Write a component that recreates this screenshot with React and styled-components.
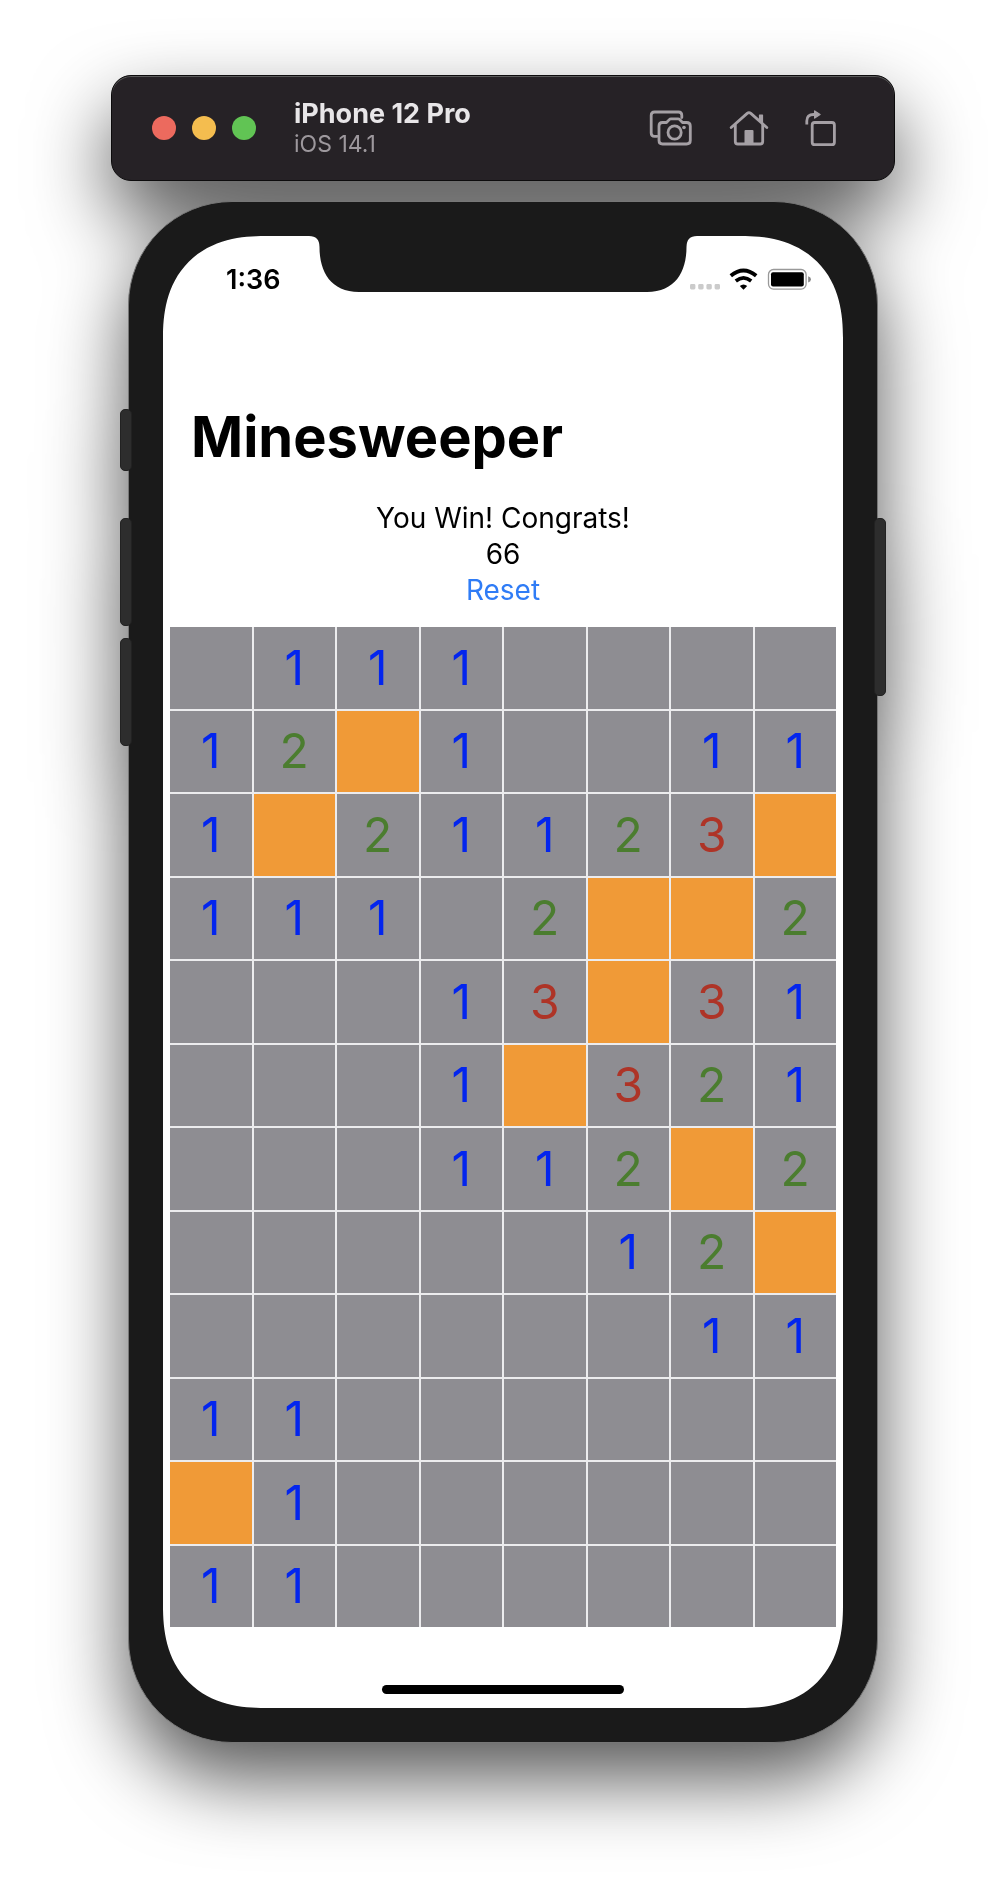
import React from "react";
import styled, { createGlobalStyle } from "styled-components";

const GlobalStyle = createGlobalStyle`
  *, *::before, *::after { box-sizing: border-box; }
  body {
    margin: 0;
    background: #fff;
    font-family: Inter, Roboto, "Liberation Sans", sans-serif;
    -webkit-font-smoothing: antialiased;
  }
  button { font: inherit; border: 0; padding: 0; background: none; cursor: pointer; }
  h1, p { margin: 0; }
`;

const Stage = styled.main`
  display: flex;
  flex-direction: column;
  align-items: center;
  gap: 20px;
  padding: 75px 20px 148px;
  filter: drop-shadow(0 36px 39px rgba(0, 0, 0, 0.66));
`;

const Toolbar = styled.header`
  display: flex;
  align-items: center;
  width: 100%;
  max-width: 784px;
  height: 106px;
  padding: 0 57px 0 40px;
  border: 1px solid #0c0b0c;
  border-radius: 20px;
  background: #262226;
  box-shadow: inset 0 1px 0 #5a5a5a;
`;

const Lights = styled.div`
  display: flex;
  gap: 16px;
  margin-right: 38px;
`;

const Light = styled.button`
  width: 24px;
  height: 24px;
  border-radius: 50%;
  background: ${(p) => p.$color};
`;

const Device = styled.div`
  flex: 1;
`;

const DeviceName = styled.p`
  font-size: 27px;
  line-height: 32px;
  font-weight: 700;
  color: #e8e6e8;
`;

const DeviceOs = styled.p`
  font-size: 23px;
  line-height: 28px;
  color: #9d989d;
`;

const Tools = styled.div`
  display: flex;
  align-items: center;
  gap: 36px;
`;

const Tool = styled.button`
  display: flex;
  color: #a5a0a5;
`;

const Phone = styled.section`
  position: relative;
  width: 100%;
  max-width: 750px;
  padding: 34px;
  border: 1px solid #777;
  border-radius: 104px;
  background: #1a1a1a;
`;

const SideButton = styled.span`
  position: absolute;
  top: ${(p) => p.$top}px;
  ${(p) => p.$side}: -9px;
  width: 12px;
  height: ${(p) => p.$length}px;
  border: 1px solid #222;
  border-radius: 5px;
  background: #2d2d2d;
`;

const Screen = styled.div`
  position: relative;
  display: flex;
  flex-direction: column;
  border-radius: 90px;
  background: #fff;
  color: #000;

  @supports (corner-shape: superellipse(1.25)) {
    border-radius: 102px;
    corner-shape: superellipse(1.25);
  }
`;

const Notch = styled.svg`
  position: absolute;
  top: -1px;
  left: 50%;
  transform: translateX(-50%);
`;

const StatusBar = styled.div`
  display: flex;
  align-items: center;
  justify-content: space-between;
  height: 88px;
  padding: 0 31px 0 63px;
`;

const Time = styled.span`
  font-size: 27px;
  line-height: 32px;
  font-weight: 600;
`;

const Title = styled.h1`
  padding: 78px 28px 0;
  font-size: 56px;
  line-height: 70px;
  font-weight: 700;
`;

const Summary = styled.div`
  display: flex;
  flex-direction: column;
  align-items: center;
  padding: 28px 0 19px;
  font-size: 28px;
  line-height: 36px;
`;

const Reset = styled.button`
  line-height: 36px;
  color: #2f7cf6;
`;

const Board = styled.div`
  display: grid;
  grid-template-columns: repeat(8, 1fr);
  gap: 2px;
  margin: 0 7px;
  background: #ececee;
`;

const digitColors = { 1: "#0325ee", 2: "#4b7d2f", 3: "#ae3427" };

const Cell = styled.button`
  display: flex;
  align-items: center;
  justify-content: center;
  min-width: 0;
  aspect-ratio: 1;
  background: ${(p) => (p.$mine ? "#f09a37" : "#8e8d92")};
  color: ${(p) => digitColors[p.$value] || "inherit"};
  font-size: 48px;
  line-height: 58px;
`;

const HomeArea = styled.div`
  display: flex;
  justify-content: center;
  padding: 58px 0 14px;
`;

const HomeIndicator = styled.div`
  width: 242px;
  height: 9px;
  border-radius: 5px;
  background: #000;
`;

const rows = [
  ".111....",
  "12*1..11",
  "1*21123*",
  "111.2**2",
  "...13*31",
  "...1*321",
  "...112*2",
  ".....12*",
  "......11",
  "11......",
  "*1......",
  "11......",
];

const ScreenshotIcon = () => (
  <svg width="44" height="36" viewBox="0 0 44 36" fill="none" stroke="currentColor" strokeWidth="2.800" strokeLinejoin="round" strokeLinecap="round">
    <path d="M8 26.300H5.500Q2.200 26.300 2.200 23V5.300Q2.200 2 5.500 2H29.500Q32.800 2 32.800 5.300V7.500" />
    <path d="M13.500 12.500H17.500L20.300 9.600Q21 8.900 22 8.900H29Q30 8.900 30.700 9.600L33.500 12.500H37.500Q41.300 12.500 41.300 16V30.500Q41.300 34 37.500 34H13.500Q10 34 10 30.500V16Q10 12.500 13.500 12.500Z" />
    <circle cx="25.600" cy="22.500" r="6.600" />
    <circle cx="35" cy="17.500" r="1.800" fill="currentColor" stroke="none" />
  </svg>
);

const HomeIcon = () => (
  <svg width="40" height="36" viewBox="0 0 40 36" fill="none" stroke="currentColor" strokeWidth="2.800" strokeLinejoin="round" strokeLinecap="round">
    <path d="M2.200 17.500L18.200 3.400Q20 1.800 21.800 3.400L37.800 17.500" />
    <path d="M6.300 15V31.500Q6.300 34 8.800 34H31.200Q33.700 34 33.700 31.500V15" />
    <path d="M15.500 21Q15.500 20 16.500 20H23.500Q24.500 20 24.500 21V34H15.500Z" fill="currentColor" stroke="none" />
    <path d="M30.500 5H33.500V13L30.500 10Z" fill="currentColor" strokeWidth="1.200" />
  </svg>
);

const RotateIcon = () => (
  <svg width="32" height="38" viewBox="0 0 32 38" fill="none" stroke="currentColor" strokeWidth="2.800" strokeLinejoin="round">
    <rect x="7.200" y="13.500" width="22.200" height="22.200" rx="2.500" />
    <path d="M1.800 15.500V12Q1.800 5.500 8.500 5.500H10" />
    <path d="M9.700 2L15 5.500L9.700 9Z" fill="currentColor" strokeWidth="1.400" />
  </svg>
);

const StatusIcons = () => (
  <svg width="122" height="24" viewBox="0 0 122 24" aria-hidden="true">
    {[0, 8.200, 16.400, 24.600].map((x) => (
      <rect key={x} x={x} y="16" width="5.400" height="5.400" rx="1.400" fill="#cbcbcb" />
    ))}
    <g fill="none" stroke="#000">
      <path d="M40.800 7.800Q53.500 -2.800 66.200 7.800" strokeWidth="3.800" />
      <path d="M45.800 13Q53.500 6.600 61.200 13" strokeWidth="3.600" />
    </g>
    <path d="M53.500 21.800L49.800 18Q53.500 14.800 57.200 18Z" />
    <rect x="78.500" y="1.500" width="37.600" height="19.600" rx="5" fill="none" stroke="#999" strokeWidth="1.300" />
    <rect x="81" y="4.200" width="32.800" height="14.200" rx="2" />
    <path d="M118.200 8.200Q121 9 121 11.300Q121 13.600 118.200 14.400Z" fill="#888" />
  </svg>
);

export default function App() {
  return (
    <>
      <GlobalStyle />
      <Stage>
        <Toolbar>
          <Lights>
            <Light $color="#ec6a5e" aria-label="Close" />
            <Light $color="#f4bd4f" aria-label="Minimize" />
            <Light $color="#61c454" aria-label="Zoom" />
          </Lights>
          <Device>
            <DeviceName>iPhone 12 Pro</DeviceName>
            <DeviceOs>iOS 14.1</DeviceOs>
          </Device>
          <Tools>
            <Tool aria-label="Screenshot"><ScreenshotIcon /></Tool>
            <Tool aria-label="Home"><HomeIcon /></Tool>
            <Tool aria-label="Rotate"><RotateIcon /></Tool>
          </Tools>
        </Toolbar>

        <Phone>
          <SideButton $side="left" $top={207} $length={62} />
          <SideButton $side="left" $top={316} $length={108} />
          <SideButton $side="left" $top={436} $length={108} />
          <SideButton $side="right" $top={316} $length={178} />
          <Screen>
            <Notch width="388" height="58" viewBox="0 0 388 58">
              <path
                d="M0 0H388V1Q377.500 1 377.500 12C377.500 37 366 57 338 57H50C22 57 10.500 37 10.500 12Q10.500 1 0 1Z"
                fill="#1a1a1a"
              />
            </Notch>
            <StatusBar>
              <Time>1:36</Time>
              <StatusIcons />
            </StatusBar>
            <Title>Minesweeper</Title>
            <Summary>
              <p>You Win! Congrats!</p>
              <p>66</p>
              <Reset>Reset</Reset>
            </Summary>
            <Board>
              {rows.flatMap((row, y) =>
                [...row].map((value, x) => (
                  <Cell
                    key={`${x}-${y}`}
                    $mine={value === "*"}
                    $value={value}
                    aria-label={value === "*" ? "Mine" : value === "." ? "Empty" : undefined}
                  >
                    {/\d/.test(value) ? value : null}
                  </Cell>
                ))
              )}
            </Board>
            <HomeArea>
              <HomeIndicator />
            </HomeArea>
          </Screen>
        </Phone>
      </Stage>
    </>
  );
}
